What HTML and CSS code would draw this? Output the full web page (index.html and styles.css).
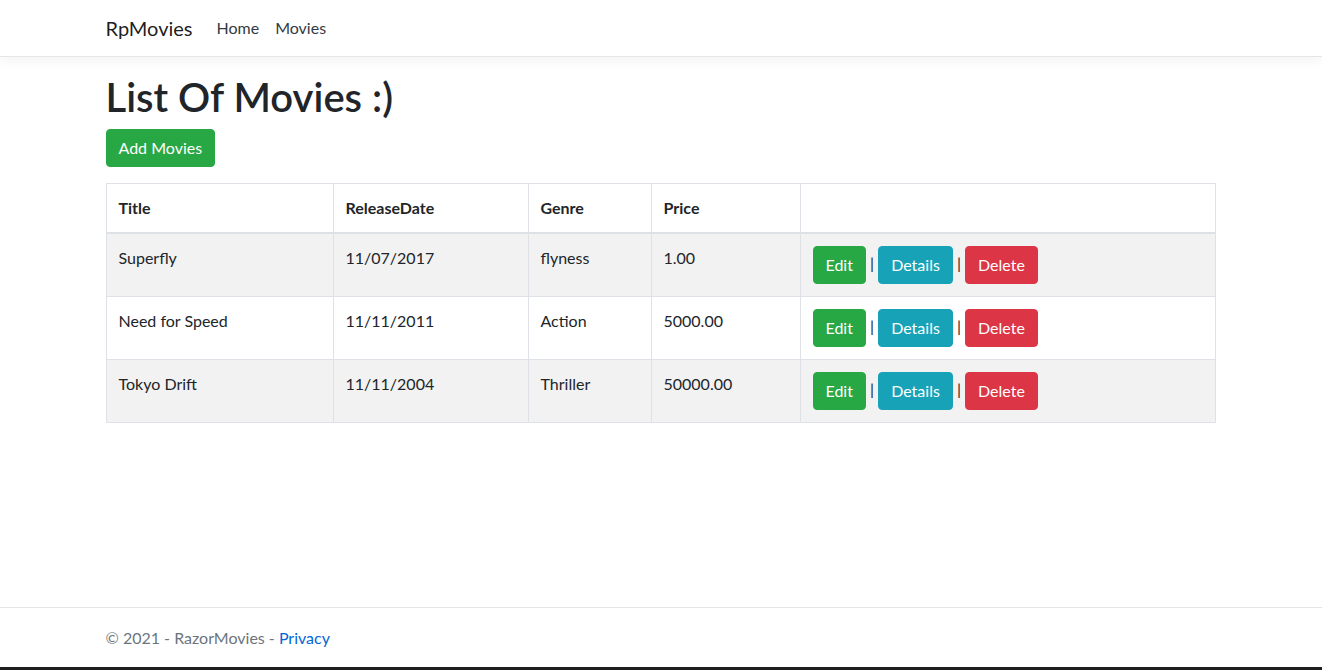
FILE: index.html
```html
<!DOCTYPE html>
<html lang="en">
<head>
<meta charset="utf-8">
<title>Index - RpMovies</title>
<link rel="stylesheet" href="styles.css">
</head>
<body>
<header class="site-header">
  <nav class="navbar">
    <div class="container nav-inner">
      <a class="brand" href="#">RpMovies</a>
      <ul class="nav">
        <li><a class="nav-link" href="#">Home</a></li>
        <li><a class="nav-link" href="#">Movies</a></li>
      </ul>
    </div>
  </nav>
</header>

<main class="container main">
  <h1 class="page-title">List Of Movies :)</h1>
  <p class="actions-top"><a class="btn btn-success" href="#">Add Movies</a></p>

  <table class="table">
    <thead>
      <tr>
        <th class="col-title">Title</th>
        <th class="col-date">ReleaseDate</th>
        <th class="col-genre">Genre</th>
        <th class="col-price">Price</th>
        <th class="col-actions"></th>
      </tr>
    </thead>
    <tbody>
      <tr>
        <td>Superfly</td>
        <td>11/07/2017</td>
        <td>flyness</td>
        <td>1.00</td>
        <td class="row-actions"><a class="btn btn-success" href="#">Edit</a> | <a class="btn btn-info" href="#">Details</a> | <a class="btn btn-danger" href="#">Delete</a></td>
      </tr>
      <tr>
        <td>Need for Speed</td>
        <td>11/11/2011</td>
        <td>Action</td>
        <td>5000.00</td>
        <td class="row-actions"><a class="btn btn-success" href="#">Edit</a> | <a class="btn btn-info" href="#">Details</a> | <a class="btn btn-danger" href="#">Delete</a></td>
      </tr>
      <tr>
        <td>Tokyo Drift</td>
        <td>11/11/2004</td>
        <td>Thriller</td>
        <td>50000.00</td>
        <td class="row-actions"><a class="btn btn-success" href="#">Edit</a> | <a class="btn btn-info" href="#">Details</a> | <a class="btn btn-danger" href="#">Delete</a></td>
      </tr>
    </tbody>
  </table>
</main>

<footer class="footer">
  <div class="container">&copy; 2021 - RazorMovies - <a class="footer-link" href="#">Privacy</a></div>
</footer>
<div class="bottom-bar"></div>
</body>
</html>
```

FILE: styles.css
```css
* { box-sizing: border-box; }

html, body { height: 100%; }

body {
  margin: 0;
  min-height: 100vh;
  display: flex;
  flex-direction: column;
  font-family: "Lato", "Noto Sans", sans-serif;
  font-size: 16px;
  line-height: 1.5;
  color: #212529;
  background: #fff;
}

a { text-decoration: none; }

.container {
  width: 100%;
  max-width: 1141px;
  margin: 0 auto;
  padding: 0 16px 0 15px;
}

/* navbar */
.site-header { position: relative; z-index: 2; }

.navbar {
  padding: 8px 16px;
  background: #fff;
  border-bottom: 1px solid #e5e5e5;
  box-shadow: 0 4px 12px rgba(0, 0, 0, 0.05);
}

.nav-inner {
  display: flex;
  align-items: center;
}

.brand {
  font-size: 20px;
  line-height: 30px;
  padding: 5px 0;
  margin-right: 16px;
  color: rgba(0, 0, 0, 0.9);
}

.nav {
  display: flex;
  list-style: none;
  margin: 0;
  padding: 0;
}

.nav-link {
  display: block;
  padding: 8px 8px;
  color: #343a40;
}

/* main */
.main {
  padding-top: 16px;
  padding-bottom: 16px;
}

.page-title {
  margin: 0 0 8px;
  font-size: 40px;
  font-weight: 600;
  line-height: 1.2;
}

.actions-top { margin: 0 0 16px; }

.btn {
  display: inline-block;
  font-size: 16px;
  line-height: 24px;
  padding: 6px 12px;
  border: 1px solid transparent;
  border-radius: 4px;
  color: #fff;
  vertical-align: middle;
  text-align: center;
}

.btn-success { background: #28a745; border-color: #28a745; }
.btn-info { background: #17a2b8; border-color: #17a2b8; }
.btn-danger { background: #dc3545; border-color: #dc3545; }

/* table */
.table {
  width: 100%;
  border-collapse: collapse;
  table-layout: fixed;
  border: 1px solid #dee2e6;
  margin-bottom: 16px;
}

.table th,
.table td {
  padding: 12px;
  border: 1px solid #dee2e6;
  text-align: left;
  vertical-align: top;
}

.table thead th {
  font-weight: 700;
  border-bottom: 2px solid #dee2e6;
  vertical-align: bottom;
}

.table tbody tr:nth-of-type(odd) { background: rgba(0, 0, 0, 0.05); }

.col-title { width: 227px; }
.col-date { width: 195px; }
.col-genre { width: 123px; }
.col-price { width: 149px; }

.row-actions { white-space: nowrap; }

/* footer */
.footer {
  margin-top: auto;
  border-top: 1px solid #e5e5e5;
  line-height: 59px;
  color: #6c757d;
  white-space: nowrap;
}

.footer-link { color: #0366d6; }

.bottom-bar {
  height: 3px;
  background: #1e1e1e;
  flex-shrink: 0;
}
```
